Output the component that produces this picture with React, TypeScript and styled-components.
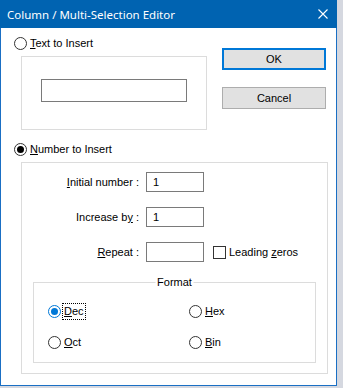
import styled, { createGlobalStyle } from "styled-components";

const GlobalStyle = createGlobalStyle`
  html, body {
    margin: 0;
    padding: 0;
    background: #d5d8e0;
  }
  body {
    font-family: "Liberation Sans", Arial, sans-serif;
    font-size: 11px;
    color: #000;
  }
`;

type RadioProps = {
  label: React.ReactNode;
  checked?: boolean;
  focused?: boolean;
  accent?: boolean;
};

const RadioOption = ({ label, checked, focused, accent }: RadioProps) => (
  <OptionRow>
    <RadioCircle $checked={checked} $accent={accent} />
    <OptionText $focused={focused}>{label}</OptionText>
  </OptionRow>
);

const App = () => {
  return (
    <>
      <GlobalStyle />
      <Window>
        <TitleBar>
          <Title>Column / Multi-Selection Editor</Title>
          <CloseButton>
            <svg width="10" height="10" viewBox="0 0 10 10">
              <path d="M0.5 0.5 L9.5 9.5 M9.5 0.5 L0.5 9.5" stroke="#fff" strokeWidth="1.1" />
            </svg>
          </CloseButton>
        </TitleBar>

        <Body>
          <TopSection>
            <LeftColumn>
              <RadioOption label={<><u>T</u>ext to Insert</>} />
              <TextBox>
                <TextField />
              </TextBox>
            </LeftColumn>
            <ButtonColumn>
              <Button $default>OK</Button>
              <Button>Cancel</Button>
            </ButtonColumn>
          </TopSection>

          <NumberSection>
            <RadioOption label={<><u>N</u>umber to Insert</>} checked />
            <NumberBox>
              <FormGrid>
                <Label><u>I</u>nitial number :</Label>
                <NumberField>1</NumberField>
                <span />
                <Label>Increase b<u>y</u> :</Label>
                <NumberField>1</NumberField>
                <span />
                <Label><u>R</u>epeat :</Label>
                <NumberField />
                <CheckRow>
                  <CheckBox />
                  <span>Leading <u>z</u>eros</span>
                </CheckRow>
              </FormGrid>

              <FormatBox>
                <Legend>Format</Legend>
                <FormatGrid>
                  <RadioOption label={<><u>D</u>ec</>} checked accent focused />
                  <RadioOption label={<><u>H</u>ex</>} />
                  <RadioOption label={<><u>O</u>ct</>} />
                  <RadioOption label={<><u>B</u>in</>} />
                </FormatGrid>
              </FormatBox>
            </NumberBox>
          </NumberSection>
        </Body>
      </Window>
    </>
  );
};

export default App;

const Window = styled.div`
  width: 337px;
  height: 386px;
  display: flex;
  flex-direction: column;
  background: #fff;
`;

const TitleBar = styled.div`
  height: 28px;
  flex: 0 0 auto;
  background: #0063b1;
  display: flex;
  align-items: center;
  justify-content: space-between;
  padding: 0 9px 0 7px;
`;

const Title = styled.div`
  font-family: "Noto Sans", "Open Sans", sans-serif;
  font-size: 11.5px;
  color: #fff;
  padding-top: 1px;
`;

const CloseButton = styled.div`
  width: 10px;
  height: 10px;
  display: flex;
  svg {
    display: block;
  }
`;

const Body = styled.div`
  flex: 1;
  border: 1px solid #1a6fc4;
  border-top: none;
  padding: 8px 0 0 13px;
  display: flex;
  flex-direction: column;
`;

const TopSection = styled.div`
  display: flex;
  align-items: flex-start;
`;

const LeftColumn = styled.div`
  width: 193px;
  display: flex;
  flex-direction: column;
`;

const OptionRow = styled.div`
  display: flex;
  align-items: center;
  height: 14px;
  gap: 3px;
`;

const RadioCircle = styled.span<{ $checked?: boolean; $accent?: boolean }>`
  width: 13px;
  height: 13px;
  box-sizing: border-box;
  border-radius: 50%;
  border: 1px solid ${(p) => (p.$accent ? "#0078d7" : "#333")};
  background: #fff;
  display: flex;
  align-items: center;
  justify-content: center;
  flex: 0 0 auto;
  &::after {
    content: "";
    display: ${(p) => (p.$checked ? "block" : "none")};
    width: 7px;
    height: 7px;
    border-radius: 50%;
    background: ${(p) => (p.$accent ? "#0078d7" : "#000")};
  }
`;

const OptionText = styled.span<{ $focused?: boolean }>`
  line-height: 13px;
  outline: ${(p) => (p.$focused ? "1px dotted #000" : "none")};
  outline-offset: 1px;
`;

const TextBox = styled.div`
  margin: 6px 0 0 7px;
  width: 186px;
  height: 74px;
  box-sizing: border-box;
  border: 1px solid #dcdcdc;
  padding: 22px 0 0 19px;
`;

const TextField = styled.div`
  width: 146px;
  height: 23px;
  box-sizing: border-box;
  border: 1px solid #7a7a7a;
`;

const ButtonColumn = styled.div`
  margin: 12px 0 0 15px;
  display: flex;
  flex-direction: column;
  gap: 17px;
`;

const Button = styled.div<{ $default?: boolean }>`
  width: 104px;
  height: 22px;
  box-sizing: border-box;
  background: #e1e1e1;
  border: ${(p) => (p.$default ? "2px solid #0078d7" : "1px solid #adadad")};
  display: flex;
  align-items: center;
  justify-content: center;
  font-size: 11px;
`;

const NumberSection = styled.div`
  margin-top: 12px;
  display: flex;
  flex-direction: column;
`;

const NumberBox = styled.div`
  margin: 6px 0 0 7px;
  width: 307px;
  height: 212px;
  box-sizing: border-box;
  border: 1px solid #dcdcdc;
  padding-top: 9px;
`;

const FormGrid = styled.div`
  display: grid;
  grid-template-columns: 117px 58px auto;
  grid-auto-rows: 20px;
  column-gap: 7px;
  row-gap: 15px;
  align-items: center;
`;

const Label = styled.span`
  text-align: right;
`;

const NumberField = styled.div`
  height: 20px;
  box-sizing: border-box;
  border: 1px solid #7a7a7a;
  padding-left: 6px;
  display: flex;
  align-items: center;
`;

const CheckRow = styled.div`
  display: flex;
  align-items: center;
  gap: 3px;
  margin-left: 2px;
`;

const CheckBox = styled.span`
  width: 13px;
  height: 13px;
  box-sizing: border-box;
  border: 1px solid #333;
`;

const FormatBox = styled.div`
  position: relative;
  margin: 20px 0 0 11px;
  width: 283px;
  height: 81px;
  box-sizing: border-box;
  border: 1px solid #dcdcdc;
  padding: 21px 0 0 14px;
`;

const Legend = styled.span`
  position: absolute;
  top: -7px;
  left: 50%;
  transform: translateX(-50%);
  background: #fff;
  padding: 0 2px;
  line-height: 13px;
`;

const FormatGrid = styled.div`
  display: grid;
  grid-template-columns: 141px 100px;
  row-gap: 17px;
`;
